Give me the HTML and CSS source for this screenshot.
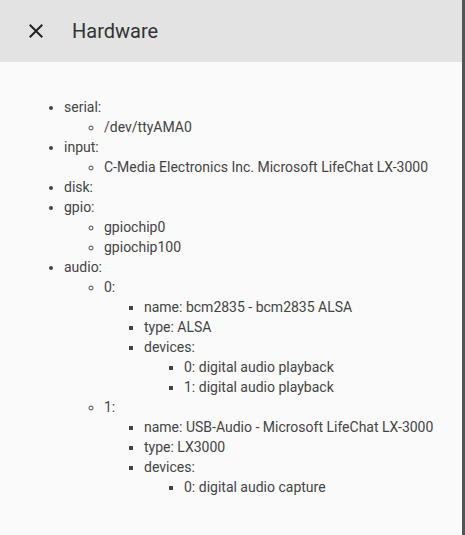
FILE: index.html
```html
<!DOCTYPE html>
<html lang="en">
<head>
  <meta charset="UTF-8">
  <title>Hardware</title>
  <link rel="stylesheet" href="styles.css">
</head>
<body>
  <div class="dialog">
    <div class="header">
      <svg class="close" width="24" height="24" viewBox="0 0 24 24">
        <path d="M19 6.41L17.59 5 12 10.59 6.41 5 5 6.41 10.59 12 5 17.59 6.41 19 12 13.41 17.59 19 19 17.59 13.41 12z"/>
      </svg>
      <h1>Hardware</h1>
    </div>
    <div class="content">
      <ul>
        <li>serial:
          <ul>
            <li>/dev/ttyAMA0</li>
          </ul>
        </li>
        <li>input:
          <ul>
            <li>C-Media Electronics Inc. Microsoft LifeChat LX-3000</li>
          </ul>
        </li>
        <li>disk:</li>
        <li>gpio:
          <ul>
            <li>gpiochip0</li>
            <li>gpiochip100</li>
          </ul>
        </li>
        <li>audio:
          <ul>
            <li>0:
              <ul>
                <li>name: bcm2835 - bcm2835 ALSA</li>
                <li>type: ALSA</li>
                <li>devices:
                  <ul>
                    <li>0: digital audio playback</li>
                    <li>1: digital audio playback</li>
                  </ul>
                </li>
              </ul>
            </li>
            <li>1:
              <ul>
                <li>name: USB-Audio - Microsoft LifeChat LX-3000</li>
                <li>type: LX3000</li>
                <li>devices:
                  <ul>
                    <li>0: digital audio capture</li>
                  </ul>
                </li>
              </ul>
            </li>
          </ul>
        </li>
      </ul>
    </div>
  </div>
</body>
</html>
```

FILE: styles.css
```css
html, body {
  height: 100%;
}
body {
  margin: 0;
  background-color: #555;
  font-family: Roboto, "Liberation Sans", Arial, sans-serif;
  overflow: hidden;
}
.dialog {
  width: 462px;
  height: 100%;
  background-color: #fafafa;
}
.header {
  height: 62px;
  display: flex;
  align-items: center;
  gap: 24px;
  padding: 0 24px;
  background-color: #e3e3e3;
}
.close {
  fill: #222;
  flex-shrink: 0;
}
.header h1 {
  margin: 0;
  font-size: 20px;
  font-weight: 400;
  color: #333;
}
.content {
  padding: 21px 24px;
  font-size: 14px;
  line-height: 20px;
  color: #444;
}
.content ul {
  margin: 0;
  padding-left: 40px;
}
.content > ul {
  margin-top: 14px;
}
```
